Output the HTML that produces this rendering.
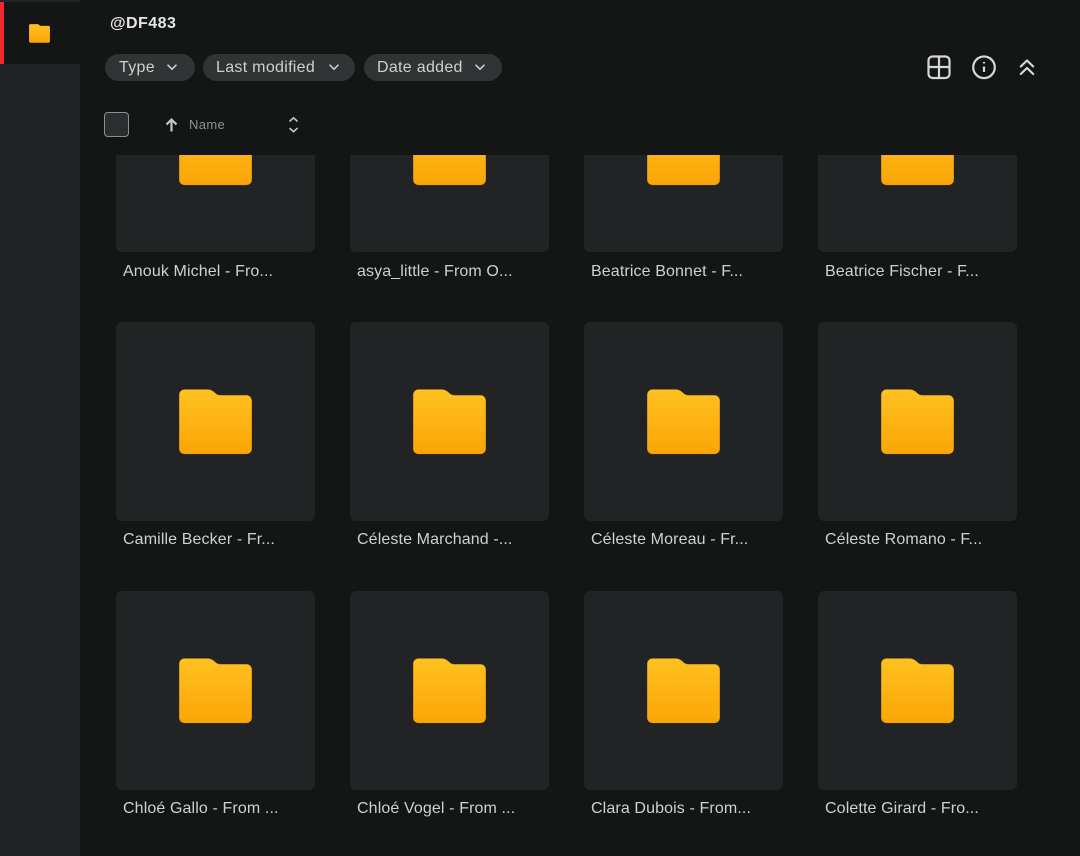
<!DOCTYPE html>
<html><head><meta charset="utf-8"><style>
*{box-sizing:border-box}
html,body{margin:0;padding:0;width:1080px;height:856px;overflow:hidden;background:#141616;font-family:"Liberation Sans",sans-serif}
.a{position:absolute}
.side{left:0;top:0;width:80px;height:856px;background:#202224}
.act{left:0;top:2px;width:80px;height:62px;background:#141616}
.red{left:0;top:2px;width:4px;height:62px;background:#ee2a33}
.clip{left:80px;top:155px;width:1000px;height:701px;overflow:hidden}
.card{position:absolute;width:199px;height:199px;background:#212325;border-radius:6px}
.card svg{position:absolute;left:63.3px;top:66.7px}
.t{position:absolute;font-size:16px;color:#cfd0d0;white-space:nowrap;line-height:20px;letter-spacing:.12px}
.chip{position:absolute;top:54px;height:27px;border-radius:14px;background:#313334;color:#cfd0d0;font-size:16px;line-height:27px;letter-spacing:.3px;padding-left:14px}
.chip svg{position:absolute;top:10px}
</style></head><body>
<svg width="0" height="0" style="position:absolute"><defs>
<linearGradient id="g" x1="0" y1="0" x2="0" y2="1"><stop offset="0" stop-color="#ffc220"/><stop offset="1" stop-color="#fba507"/></linearGradient>
<symbol id="f" viewBox="0 0 73 66"><path d="M5.500 0.500H28.500C31 0.500 33 1.300 35 3L37 4.800C38.200 5.800 39.500 6.300 41.500 6.300H67.500A5.300 5.300 0 0 1 72.800 11.600V59.700A5.300 5.300 0 0 1 67.500 65H5.500A5.300 5.300 0 0 1 0.200 59.700V5.800A5.300 5.300 0 0 1 5.500 0.500Z" fill="url(#g)" stroke="#b9821a" stroke-opacity=".45" stroke-width=".6"/></symbol>
</defs></svg>
<div class="a side"></div><div class="a act"></div><div class="a red"></div>
<svg class="a" style="left:29px;top:24px" width="21" height="19"><use href="#f" width="21" height="19"/></svg>
<div class="a" style="left:110px;top:14px;font-size:16px;font-weight:700;color:#e4e5e5;line-height:20px;letter-spacing:.45px">@DF483</div>
<div class="chip" style="left:105px;width:90px">Type<svg style="left:62px" width="10" height="7" viewBox="0 0 10 7"><path d="M1 1.200L5 5.200L9 1.200" fill="none" stroke="#cfd0d0" stroke-width="1.500" stroke-linecap="round"/></svg></div>
<div class="chip" style="left:203px;width:152px;padding-left:13px">Last modified<svg style="left:126px" width="10" height="7" viewBox="0 0 10 7"><path d="M1 1.200L5 5.200L9 1.200" fill="none" stroke="#cfd0d0" stroke-width="1.500" stroke-linecap="round"/></svg></div>
<div class="chip" style="left:364px;width:138px;padding-left:13px">Date added<svg style="left:111px" width="10" height="7" viewBox="0 0 10 7"><path d="M1 1.200L5 5.200L9 1.200" fill="none" stroke="#cfd0d0" stroke-width="1.500" stroke-linecap="round"/></svg></div>
<svg class="a" style="left:926px;top:54px" width="26" height="26" viewBox="0 0 26 26" fill="none" stroke="#d6d7d7" stroke-width="2.200"><rect x="2.500" y="2.500" width="21" height="21.500" rx="4"/><path d="M13 2.500V24M2.500 13H23.500"/></svg>
<svg class="a" style="left:971px;top:54px" width="26" height="26" viewBox="0 0 26 26" fill="none" stroke="#d6d7d7" stroke-width="2.200"><circle cx="13" cy="13.300" r="10.800"/><path d="M13 12.500V18"/><path d="M13 8V9.500"/></svg>
<svg class="a" style="left:1017px;top:57px" width="20" height="20" viewBox="0 0 20 20" fill="none" stroke="#d6d7d7" stroke-width="2.200" stroke-linecap="round" stroke-linejoin="round"><path d="M3.800 9.500L10 3.500L16.200 9.500M3.800 17L10 11L16.200 17"/></svg>
<div class="a" style="left:104px;top:112px;width:25px;height:25px;border-radius:4px;background:#2b2d2e;border:1.500px solid #8e8f90"></div>
<svg class="a" style="left:164px;top:117px" width="15" height="16" viewBox="0 0 15 16" fill="none" stroke="#c6c7c7" stroke-width="2.200"><path d="M7.500 14.500V3M2.500 7.500L7.500 2.500L12.500 7.500"/></svg>
<div class="a" style="left:189px;top:115px;font-size:13px;color:#8f9090;line-height:20px;letter-spacing:.35px">Name</div>
<svg class="a" style="left:287px;top:116px" width="13" height="18" viewBox="0 0 13 18" fill="none" stroke="#c6c7c7" stroke-width="1.600" stroke-linecap="round"><path d="M3 5L6.500 1.800L10 5M3 12.500L6.500 15.700L10 12.500"/></svg>
<div class="a clip">
<div class="card" style="left:36px;top:-102px"><svg width="73" height="66"><use href="#f" width="73" height="66"/></svg></div>
<div class="card" style="left:270px;top:-102px"><svg width="73" height="66"><use href="#f" width="73" height="66"/></svg></div>
<div class="card" style="left:504px;top:-102px"><svg width="73" height="66"><use href="#f" width="73" height="66"/></svg></div>
<div class="card" style="left:738px;top:-102px"><svg width="73" height="66"><use href="#f" width="73" height="66"/></svg></div>
<div class="t" style="left:43px;top:107px">Anouk Michel - Fro...</div>
<div class="t" style="left:277px;top:107px">asya_little - From O...</div>
<div class="t" style="left:511px;top:107px">Beatrice Bonnet - F...</div>
<div class="t" style="left:745px;top:107px">Beatrice Fischer - F...</div>
<div class="card" style="left:36px;top:167px"><svg width="73" height="66"><use href="#f" width="73" height="66"/></svg></div>
<div class="card" style="left:270px;top:167px"><svg width="73" height="66"><use href="#f" width="73" height="66"/></svg></div>
<div class="card" style="left:504px;top:167px"><svg width="73" height="66"><use href="#f" width="73" height="66"/></svg></div>
<div class="card" style="left:738px;top:167px"><svg width="73" height="66"><use href="#f" width="73" height="66"/></svg></div>
<div class="t" style="left:43px;top:375px">Camille Becker - Fr...</div>
<div class="t" style="left:277px;top:375px">Céleste Marchand -...</div>
<div class="t" style="left:511px;top:375px">Céleste Moreau - Fr...</div>
<div class="t" style="left:745px;top:375px">Céleste Romano - F...</div>
<div class="card" style="left:36px;top:436px"><svg width="73" height="66"><use href="#f" width="73" height="66"/></svg></div>
<div class="card" style="left:270px;top:436px"><svg width="73" height="66"><use href="#f" width="73" height="66"/></svg></div>
<div class="card" style="left:504px;top:436px"><svg width="73" height="66"><use href="#f" width="73" height="66"/></svg></div>
<div class="card" style="left:738px;top:436px"><svg width="73" height="66"><use href="#f" width="73" height="66"/></svg></div>
<div class="t" style="left:43px;top:644px">Chloé Gallo - From ...</div>
<div class="t" style="left:277px;top:644px">Chloé Vogel - From ...</div>
<div class="t" style="left:511px;top:644px">Clara Dubois - From...</div>
<div class="t" style="left:745px;top:644px">Colette Girard - Fro...</div>
</div>
</body></html>
